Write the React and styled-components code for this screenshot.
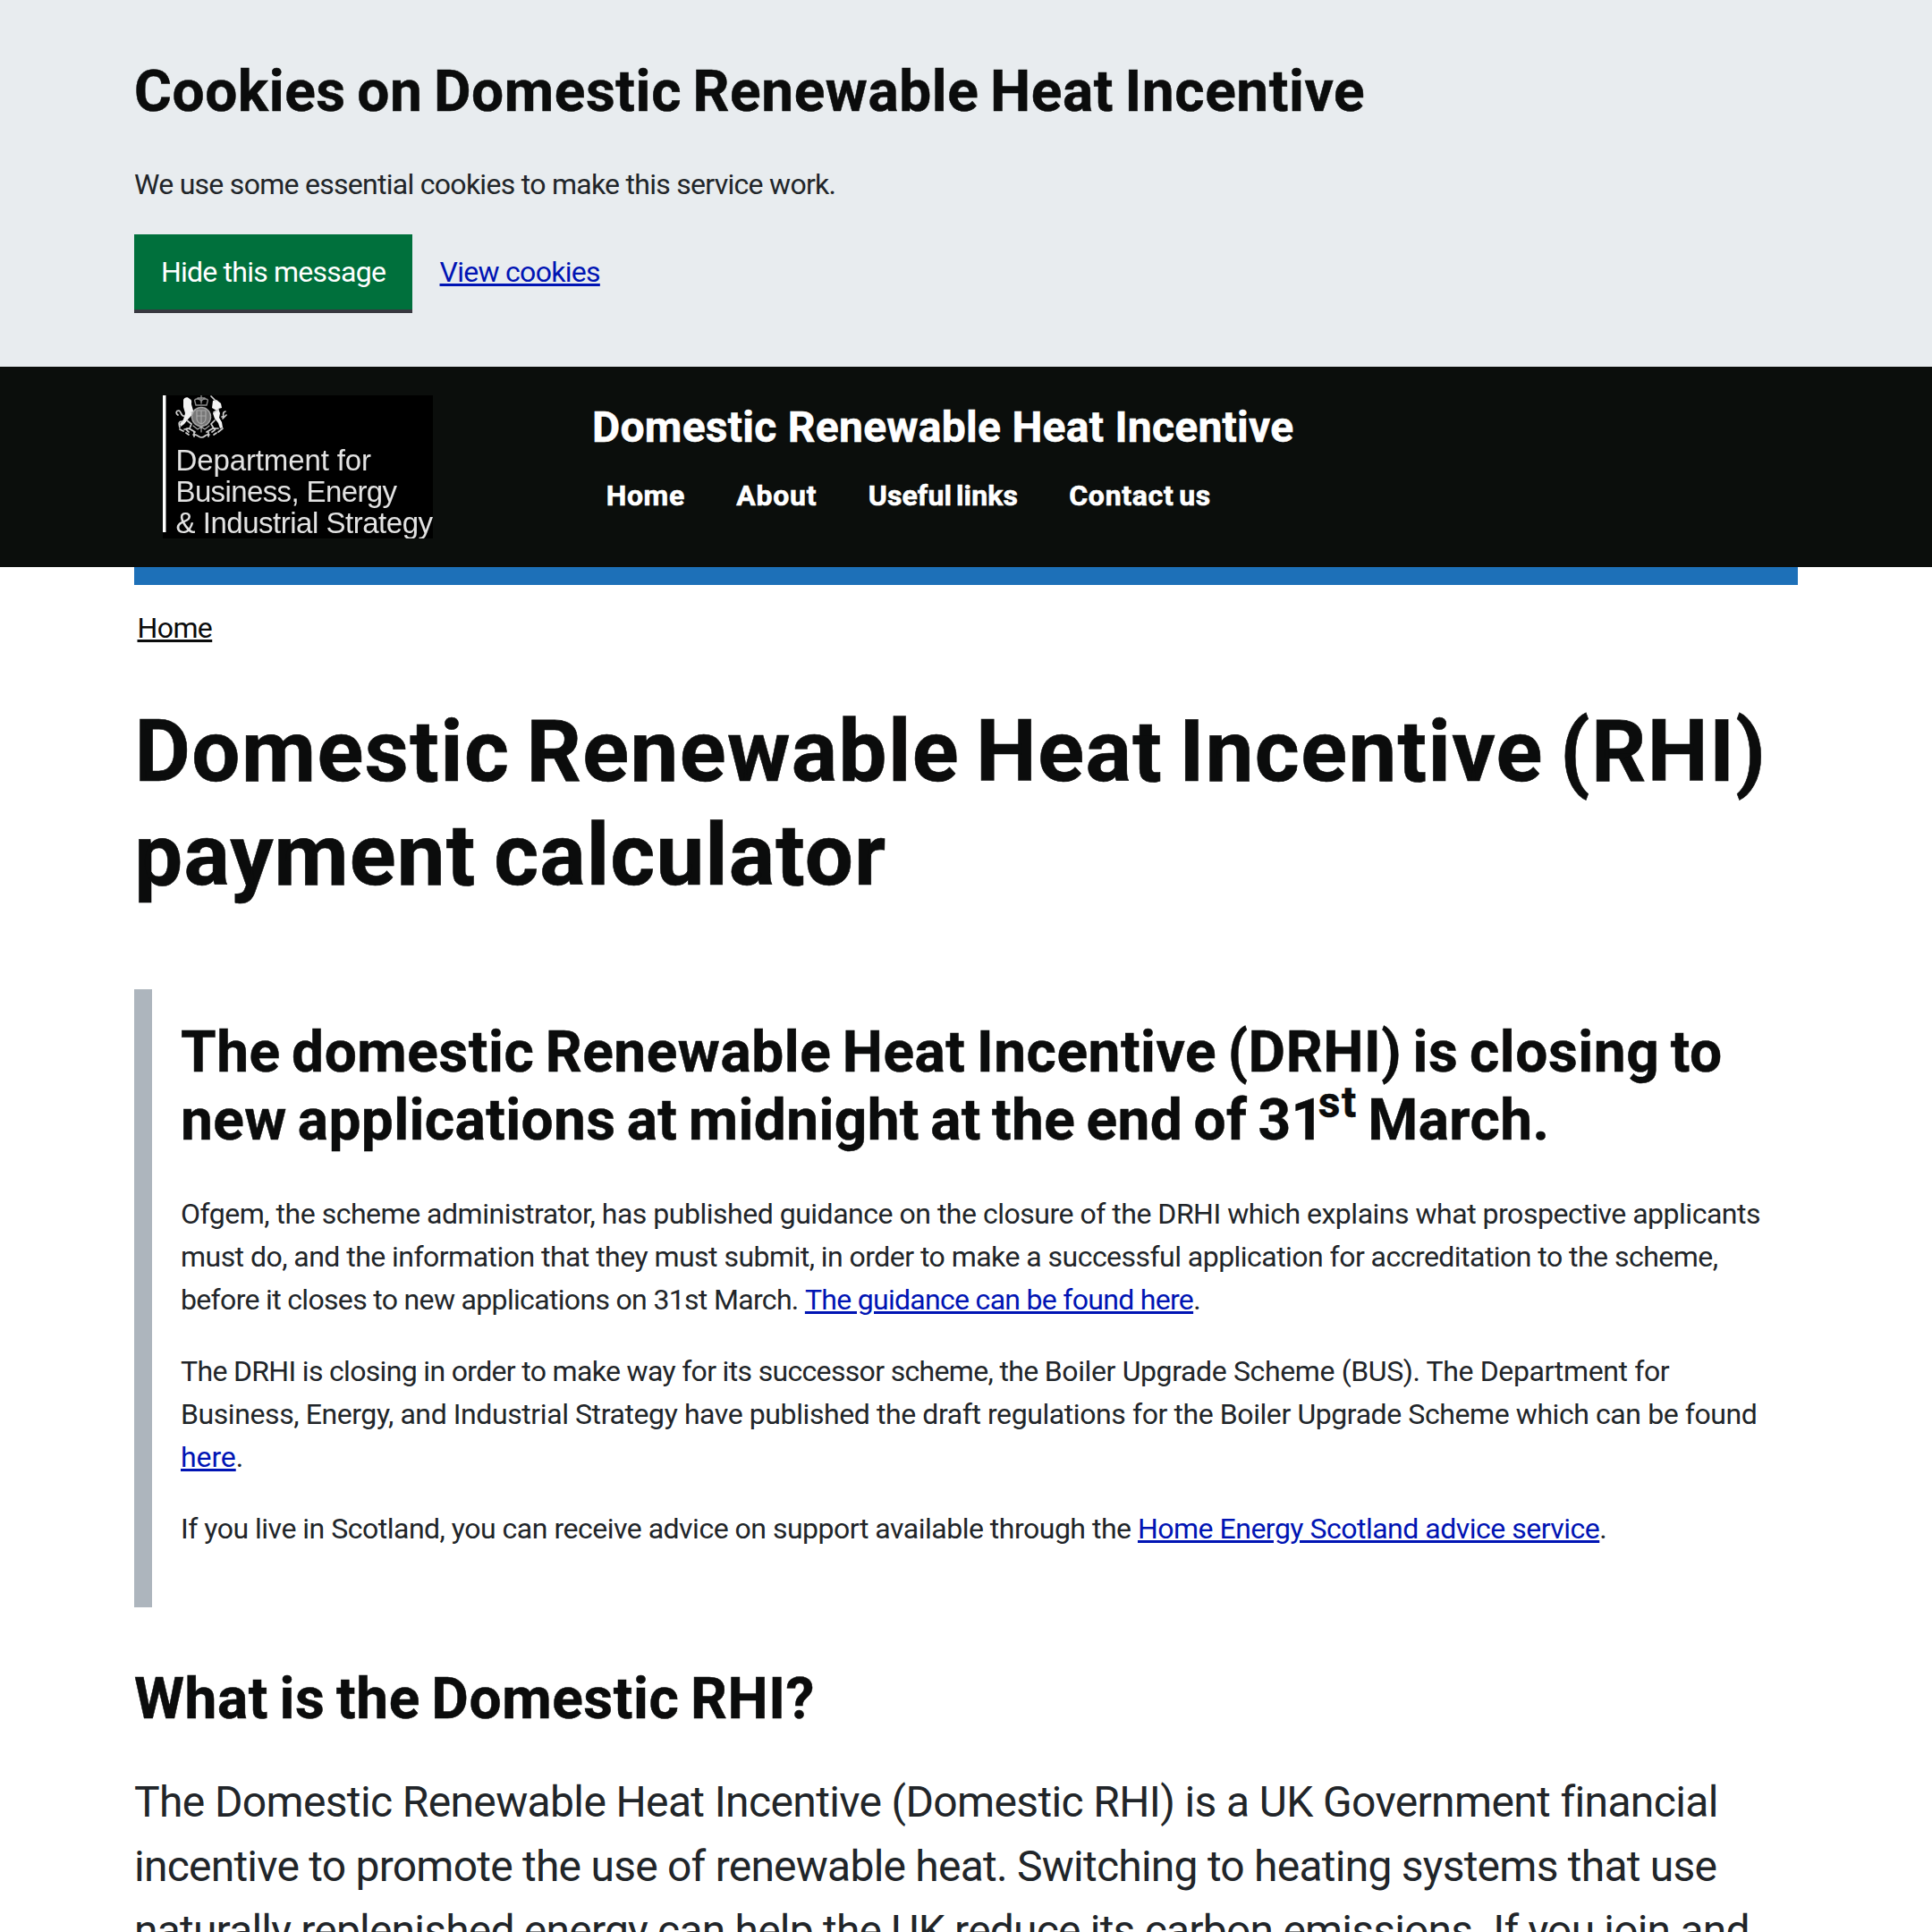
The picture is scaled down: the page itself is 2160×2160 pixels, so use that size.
import React from 'react';
import styled, { createGlobalStyle } from 'styled-components';

const ink = '#0b0c0c';
const body = '#212529';
const link = '#0014b4';

const GlobalStyle = createGlobalStyle`
  * { box-sizing: border-box; }
  body {
    margin: 0;
    background: #fff;
    color: ${body};
    font-family: Roboto, "Liberation Sans", sans-serif;
    font-size: 32px;
    line-height: 48px;
  }
  h1, h2, p, ul { margin: 0; padding: 0; }
`;

const Page = styled.div`
  width: 2160px;
  height: 2160px;
  overflow: hidden;
`;

const Container = styled.div`
  width: 1860px;
  margin: 0 auto;
`;

const Track = styled.span`
  letter-spacing: ${(p) => p.$s}px;
  word-spacing: ${(p) => p.$w || 0}px;
`;

const Line = styled.span`
  display: block;
  white-space: nowrap;
  letter-spacing: ${(p) => p.$s || 0}px;
  word-spacing: ${(p) => p.$w || 0}px;
  margin-left: ${(p) => p.$x || 0}px;
`;

const Link = styled.a`
  color: ${(p) => (p.$dark ? ink : link)};
  letter-spacing: ${(p) => p.$s}px;
  text-decoration: underline;
  text-decoration-thickness: 3px;
  text-underline-offset: 2px;
`;

const Banner = styled.section`
  height: 410px;
  padding-top: 64px;
  background: #e8ecef;
`;

const Heading = styled.h2`
  color: ${ink};
  font-size: 64px;
  font-weight: 700;
  line-height: 76px;
  -webkit-text-stroke: 0.5px ${ink};
`;

const BannerHeading = styled(Heading)`
  line-height: 77px;
  margin-bottom: 41px;
`;

const Actions = styled.div`
  display: flex;
  align-items: center;
  gap: 30.5px;
  margin-top: 32px;
`;

const Button = styled.button`
  width: 311px;
  height: 84px;
  padding: 0;
  border: 0;
  background: #00703c;
  box-shadow: 0 4px 0 #383840;
  color: #fff;
  font: inherit;
  letter-spacing: -0.77px;
  white-space: nowrap;
`;

const Header = styled.header`
  background: #0b0e0c;
  height: 224px;
`;

const HeaderRow = styled(Container)`
  display: flex;
  padding: 32px 32px 0;
`;

const Logo = styled.div`
  display: flex;
  width: 302px;
  height: 160px;
  margin-right: 178px;
  overflow: hidden;
  background: #000;
`;

const LogoBar = styled.div`
  width: 4px;
  height: 153px;
  background: #fff;
  border-right: 1px solid #777;
`;

const LogoBody = styled.div`
  padding-left: 10.5px;
  color: #e2e2e2;
  font-family: "Liberation Sans", Arial, sans-serif;
  font-size: 33px;
  line-height: 35.2px;
  filter: blur(0.5px);
`;

const CrestSvg = styled.svg`
  display: block;
  width: 58px;
  height: 48px;
  margin: 0 0 7px -0.5px;
`;

const HeaderText = styled.div`
  padding-top: 6px;
  color: #fff;
  font-weight: 700;
  -webkit-text-stroke: 0.6px #fff;
`;

const ServiceName = styled.div`
  font-size: 48px;
  line-height: 60px;
  letter-spacing: 0.27px;
  white-space: nowrap;
`;

const Nav = styled.nav`
  display: flex;
  gap: 57.3px;
  padding: 22px 0 0 15.7px;
  white-space: nowrap;
`;

const BlueBar = styled(Container)`
  height: 20px;
  background: #1d70b8;
`;

const Breadcrumb = styled.nav`
  padding: 24px 0 0 3.5px;
`;

const Title = styled.h1`
  margin-top: 56px;
  color: ${ink};
  font-size: 96px;
  font-weight: 700;
  line-height: 116px;
  -webkit-text-stroke: 0.6px ${ink};
`;

const Inset = styled.section`
  margin: 92px 0 65px;
  padding: 33px 0 64px 32px;
  border-left: 20px solid #adb5bd;
`;

const InsetParagraph = styled.p`
  margin-top: ${(p) => (p.$first ? 42 : 32)}px;
`;

const Sup = styled.sup`
  position: relative;
  top: -25px;
  margin: 0 11.5px 0 -7px;
  font-size: 48px;
  line-height: 0;
  vertical-align: baseline;
  letter-spacing: 1.6px;
`;

const Lead = styled.p`
  margin-top: 41px;
  font-size: 48px;
  line-height: 72px;
`;

function Crest() {
  return (
    <CrestSvg viewBox="0 0 58 48" fill="none" strokeLinecap="round" strokeLinejoin="round">
      <g fill="#f4f4f4">
        <path d="M9 5C10 2 14 1 16 4C19 5 18 8 18 10L20 17C20 21 17 24 14 27L10 32L6 35L5 32L9 27L11 20L9 13Z" />
        <path d="M42 6L46 5L51 9L52 14L48 15L50 20L49 25L52 30L53 36L50 37L48 31L44 26L42 20L46 17L41 14Z" />
      </g>
      <g stroke="#cfcfcf" strokeWidth="1.7">
        <path d="M10 23C6 24 7 18 4 17C1 17 0 20 3 22M8 29C3 29 4 32 5 36M5 38L9 40M13 28L18 32L16 37L10 38M18 19L22 21" />
        <path d="M48 16L43 19M40 1L45 6M52 24C56 24 51 19 56 18M57 22L53 26M44 28L40 32L43 37L48 37M53 37L48 41" />
        <path d="M15 41C10 37 12 36 17 38L22 41M41 41C48 37 43 36 40 38L35 41M12 42L15 44M46 42L43 44" />
        <path d="M20 44C25 43 25 47 29 47C34 47 33 43 38 44M21 41V46M37 41V46" />
      </g>
      <g stroke="#8d8d8d" strokeWidth="1.4">
        <path d="M29 0V9M25 3H33M22 7C20 3 28 3 29 7C30 3 38 3 36 7L35 11H23Z" />
      </g>
      <circle cx="29" cy="24" r="10.5" fill="#777" stroke="#a8a8a8" strokeWidth="1.6" strokeDasharray="3 1.4" />
      <g stroke="#a8a8a8" strokeWidth="1.2">
        <path d="M24 17H34V26C34 30 29 32 29 32S24 30 24 26ZM29 17V31M24 23H34" />
        <path d="M20 34L25 38L29 35L33 38L38 34M29 35V41" />
      </g>
    </CrestSvg>
  );
}

const navItems = [
  ['Home', 0.64],
  ['About', 0.78],
  ['Useful links', 0.1, -3],
  ['Contact us', 0.7, -3],
];

export default function App() {
  return (
    <Page>
      <GlobalStyle />
      <Banner>
        <Container>
          <BannerHeading>
            <Line $s={0.58} $w={-4}>Cookies on Domestic Renewable Heat Incentive</Line>
          </BannerHeading>
          <p>
            <Line $s={-0.72}>We use some essential cookies to make this service work.</Line>
          </p>
          <Actions>
            <Button>Hide this message</Button>
            <Link $s={-0.71}>View cookies</Link>
          </Actions>
        </Container>
      </Banner>

      <Header>
        <HeaderRow>
          <Logo>
            <LogoBar />
            <LogoBody>
              <Crest />
              <Line $s={-0.12}>Department for</Line>
              <Line $s={-0.62}>Business, Energy</Line>
              <Line $s={-0.48}>&amp; Industrial Strategy</Line>
            </LogoBody>
          </Logo>
          <HeaderText>
            <ServiceName>Domestic Renewable Heat Incentive</ServiceName>
            <Nav>
              {navItems.map(([label, s, w]) => (
                <Track key={label} $s={s} $w={w}>{label}</Track>
              ))}
            </Nav>
          </HeaderText>
        </HeaderRow>
      </Header>
      <BlueBar />

      <Container>
        <Breadcrumb>
          <Link $dark $s={-0.6}>Home</Link>
        </Breadcrumb>

        <Title>
          <Line $s={1.36} $w={-7} $x={0.6}>Domestic Renewable Heat Incentive (RHI)</Line>
          <Line $s={1.1} $w={-5} $x={0.3}>payment calculator</Line>
        </Title>

        <Inset>
          <Heading>
            <Line $s={0.53} $w={-4}>The domestic Renewable Heat Incentive (DRHI) is closing to</Line>
            <Line $s={0.37} $w={-4}>
              new applications at midnight at the end of 31<Sup>st</Sup>March.
            </Line>
          </Heading>
          <InsetParagraph $first>
            <Line $s={-0.485}>
              Ofgem, the scheme administrator, has published guidance on the closure of the DRHI which explains what prospective applicants
            </Line>
            <Line $s={-0.535}>
              must do, and the information that they must submit, in order to make a successful application for accreditation to the scheme,
            </Line>
            <Line $s={-0.67}>
              before it closes to new applications on 31st March. <Link $s={-0.7}>The guidance can be found here</Link>.
            </Line>
          </InsetParagraph>
          <InsetParagraph>
            <Line $s={-0.37}>
              <Track $s={-0.67}>The DRHI is closing in order to make way for its successor scheme, the </Track>
              Boiler Upgrade Scheme (BUS). The Department for
            </Line>
            <Line $s={-0.414}>
              Business, Energy, and Industrial Strategy have published the draft regulations for the Boiler Upgrade Scheme which can be found
            </Line>
            <Line $s={-0.3}>
              <Link $s={-0.1}>here</Link>.
            </Line>
          </InsetParagraph>
          <InsetParagraph>
            <Line $s={-0.496}>
              If you live in Scotland, you can receive advice on support available through the{' '}
              <Link $s={-0.5}>Home Energy Scotland advice service</Link>.
            </Line>
          </InsetParagraph>
        </Inset>

        <Heading>
          <Line $s={0.58} $w={-4}>What is the Domestic RHI?</Line>
        </Heading>
        <Lead>
          <Line $s={-0.64}>The Domestic Renewable Heat Incentive (Domestic RHI) is a UK Government financial</Line>
          <Line $s={-0.767}>incentive to promote the use of renewable heat. Switching to heating systems that use</Line>
          <Line $s={-0.795}>naturally replenished energy can help the UK reduce its carbon emissions. If you join and</Line>
        </Lead>
      </Container>
    </Page>
  );
}
